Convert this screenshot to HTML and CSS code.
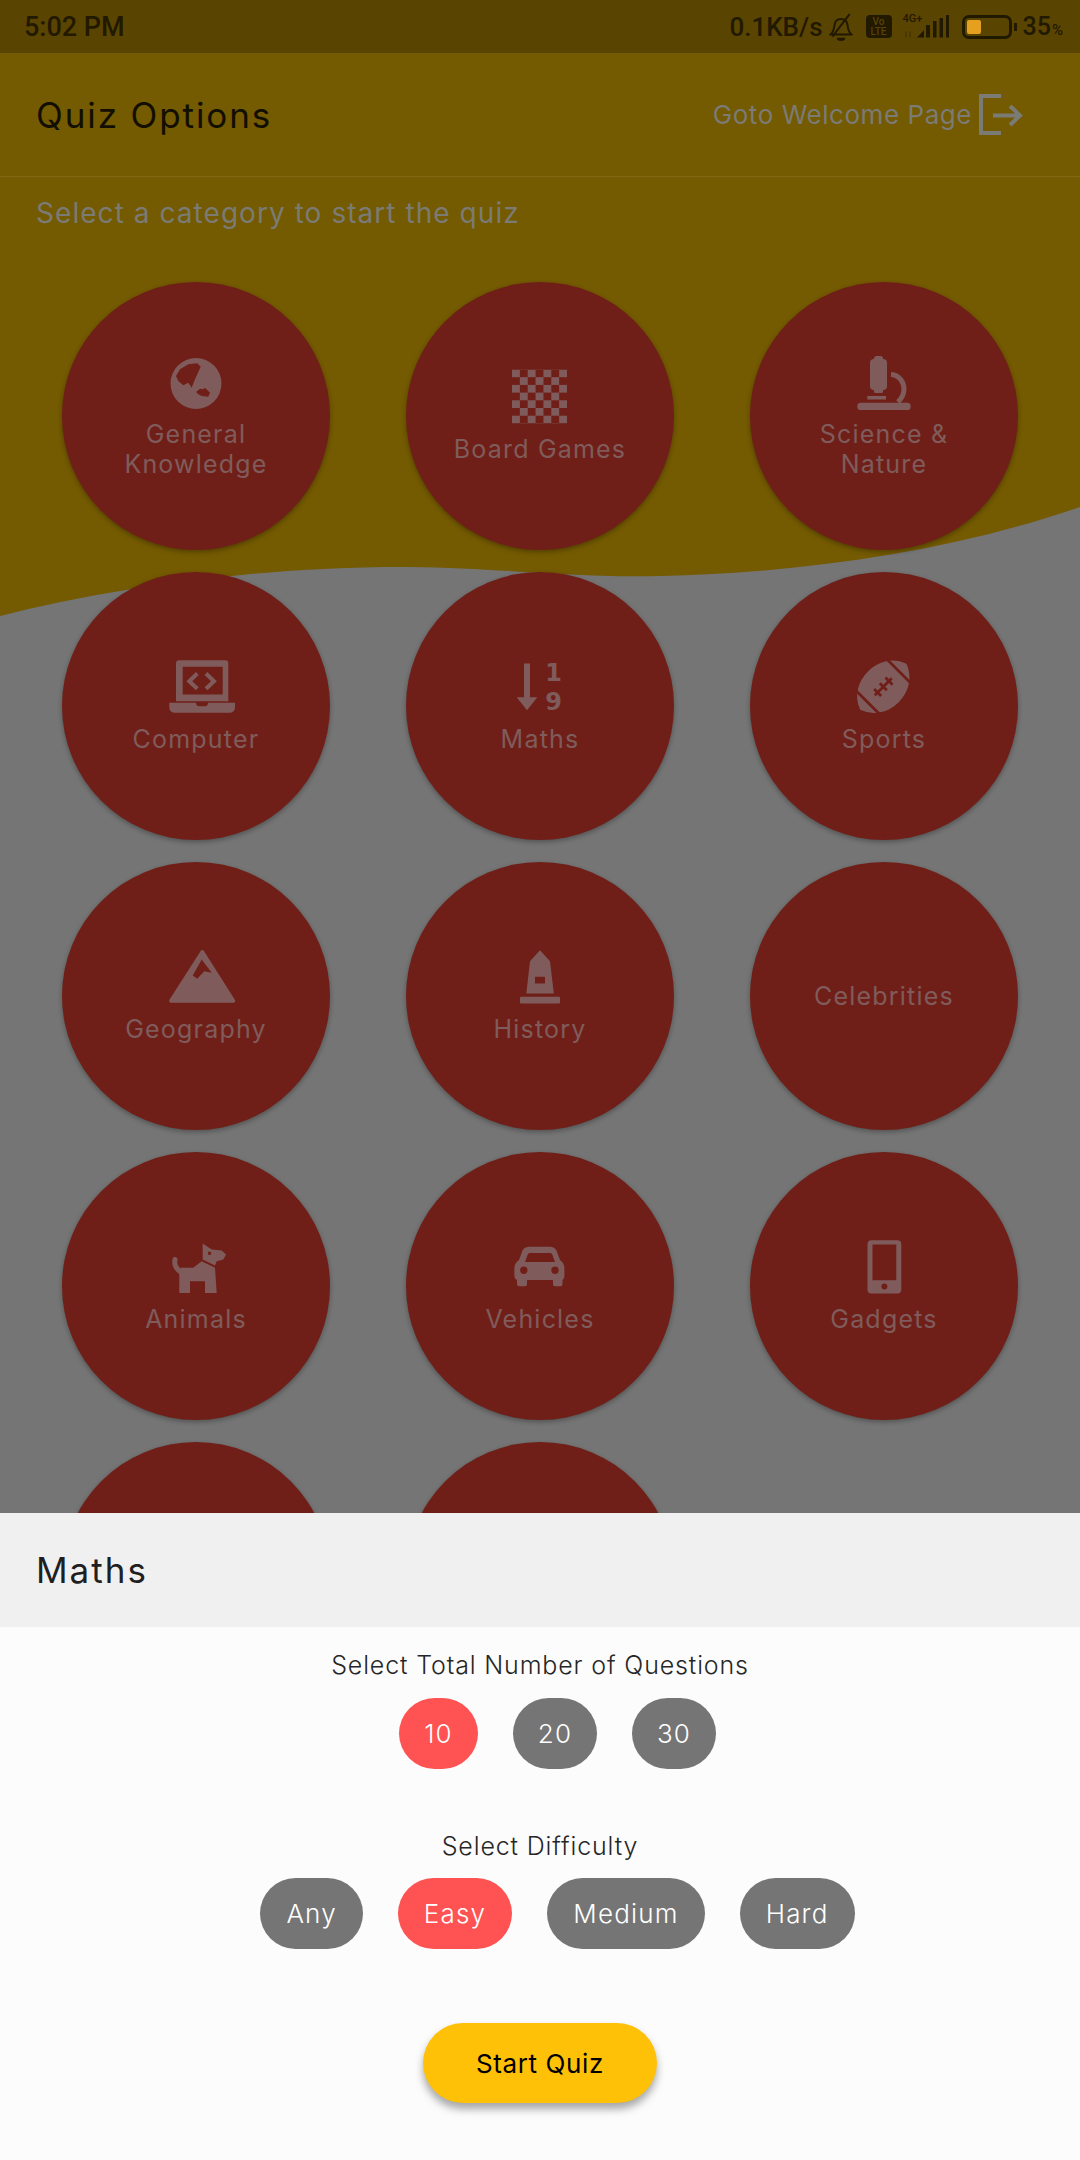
FILE: index.html
```html
<!DOCTYPE html>
<html lang="en">
<head>
  <meta charset="UTF-8">
  <meta name="viewport" content="width=device-width, initial-scale=1.0">
  <title>Quiz Options</title>
  <link rel="stylesheet" href="styles.css">
</head>
<body>
  <div class="screen">
    <div class="top">
      <svg class="wave" viewBox="0 0 1080 1513" width="1080" height="1513">
        <path d="M0 616C130 583 280 566 410 567C500 568 570 578 660 576C800 573 950 552 1080 507V0H0Z"/>
      </svg>

      <div class="statusbar">
        <span class="time">5:02 PM</span>
        <div class="status-right">
          <span class="speed">0.1KB/s</span>
          <svg class="st-bell" width="28" height="28" viewBox="0 0 26 26">
            <path d="M3 20c3-2 3.500-5 4-9 .5-3.500 3-5.500 6-5.500s5.500 2 6 5.500c.5 4 1 7 4 9Z" fill="none" stroke="currentColor" stroke-width="1.800" stroke-linejoin="round"/>
            <path d="M21 1 5 22" stroke="currentColor" stroke-width="1.800"/>
            <path d="M9 23h8a4 3 0 0 1-8 0Z" fill="currentColor"/>
          </svg>
          <div class="volte"><span>Vo</span><span>LTE</span></div>
          <div class="signal">
            <span class="net">4G+</span>
            <svg width="46" height="24" viewBox="0 0 46 24">
              <path d="M3 22.500v-6M7 16.500v6" stroke="currentColor" stroke-width="1" opacity="0.500"/>
              <path d="M14 22.500 21 15v7.500ZM23 22.500V10h4v12.500ZM30 22.500V6h3.500v16.500ZM36.500 22.500V3h3.500v19.500ZM43 22.500V0h3v22.500Z" fill="currentColor"/>
            </svg>
          </div>
          <div class="battery"><i></i></div>
          <span class="percent">35<small>%</small></span>
        </div>
      </div>

      <header class="appbar">
        <h1>Quiz Options</h1>
        <a class="goto">
          Goto Welcome Page
          <svg class="exit" width="46" height="42" viewBox="0 0 46 42">
            <path d="M23 2H3v37h20" fill="none" stroke="currentColor" stroke-width="4"/>
            <path d="M15 21.500h26M32 12l10 9.500L32 31" fill="none" stroke="currentColor" stroke-width="4"/>
          </svg>
        </a>
      </header>

      <p class="hint">Select a category to start the quiz</p>

      <div class="categories">
        <div class="category">
          <svg class="cat-icon" viewBox="0 0 60 60">
            <path fill-rule="evenodd" d="M30 5a25.500 25.500 0 1 0 0 51 25.500 25.500 0 0 0 0-51ZM10 23l4-6.700 8.300-5 9-1 3.400 3.400-3.400 7.600-2.300 5-3.300 8.400-3.400-5-5 2.600-5-4.300ZM30 39l4-3.300 3.300.6 1.700-1.600 5 5-1.700 4-6.600-.7-3.400-1.700Z"/>
          </svg>
          <span>General Knowledge</span>
        </div>
        <div class="category">
          <svg class="cat-icon" viewBox="0 0 60 60">
            <defs>
              <pattern id="checks" width="15.720" height="15.400" patternUnits="userSpaceOnUse" x="2" y="1.500">
                <rect width="7.860" height="7.700"/>
                <rect x="7.860" y="7.700" width="7.860" height="7.700"/>
              </pattern>
            </defs>
            <rect class="checks" x="2" y="1.500" width="55" height="54"/>
          </svg>
          <span>Board Games</span>
        </div>
        <div class="category">
          <svg class="cat-icon" viewBox="0 0 60 60">
            <rect x="20" y="3" width="9" height="6" rx="2.500"/>
            <rect x="16" y="6" width="17" height="31" rx="4"/>
            <rect x="20" y="35" width="9" height="5" rx="1.500"/>
            <rect x="13.300" y="43" width="18.700" height="3.500"/>
            <rect x="3.300" y="49.700" width="53.400" height="7.300" rx="3.600"/>
            <path d="M37 21.500C46 22 50 30 50 36c0 6-3 10-6 13" fill="none" stroke="currentColor" stroke-width="5"/>
          </svg>
          <span>Science &amp; Nature</span>
        </div>

        <div class="category">
          <svg class="cat-icon" viewBox="0 0 60 60">
            <path fill-rule="evenodd" d="M13 2.200h46.300a3 3 0 0 1 3 3v38H10v-38a3 3 0 0 1 3-3ZM16.700 8.800v27.700h40V8.800Z"/>
            <path d="M31.300 15.500l-8 7.700 8 7.600M40 15.500l8 7.700-8 7.600" fill="none" stroke="currentColor" stroke-width="4"/>
            <path d="M3.300 44.800H30q0 3.500 3.500 3.500h5q3.500 0 3.500-3.500h27V49q0 5.800-6 5.800H9.300q-6 0-6-5.800Z"/>
          </svg>
          <span>Computer</span>
        </div>
        <div class="category">
          <svg class="cat-icon" viewBox="0 0 60 60">
            <path d="M14 5.500h6v33.700h7.300L17 52.200 6.700 39.200H14Z"/>
            <text class="digit" x="43.500" y="23">1</text>
            <text class="digit" x="43.500" y="51.500">9</text>
          </svg>
          <span>Maths</span>
        </div>
        <div class="category">
          <svg class="cat-icon" viewBox="0 0 60 60">
            <g transform="translate(29.300 28.800) rotate(-45)">
              <path class="ball" d="M-31 0C-21-27 21-27 31 0C21 27-21 27-31 0Z"/>
              <path class="cut" d="M-22-26V26M22-26V26M-12 0H12M-8-5V5M0-5V5M8-5V5"/>
            </g>
          </svg>
          <span>Sports</span>
        </div>

        <div class="category">
          <svg class="cat-icon" viewBox="0 0 60 60">
            <path fill-rule="evenodd" d="M34.500 3.200a2 2 0 0 1 3.600 0L69 52a2 2 0 0 1-2 2.800H5.300A2 2 0 0 1 3.300 52ZM35.700 11.500l-9 16 4.600 3.300 7-7.600 7.400 1.600Z"/>
          </svg>
          <span>Geography</span>
        </div>
        <div class="category">
          <svg class="cat-icon" viewBox="0 0 60 60">
            <path fill-rule="evenodd" d="M30 2.200 40 13.200l3.800 32.300H16.300L20 13.200ZM25 28.800v6.700h10v-6.700Z"/>
            <rect x="10" y="48.800" width="40" height="6.700" rx="1"/>
          </svg>
          <span>History</span>
        </div>
        <div class="category"><span>Celebrities</span></div>

        <div class="category">
          <svg class="cat-icon" viewBox="0 0 60 60">
            <path fill-rule="evenodd" d="M36.700 5.500 45.700 11.500l10 1 4.300 4-2.700 5-6.600 1.700-1.700 4.300-12.300-6ZM43.500 13.500a1.800 1.800 0 1 0 0 3.600 1.800 1.800 0 0 0 0-3.600Z"/>
            <path d="M14.700 29.800H27.300l8.400-6.600L49 29.800 50.700 55H39V43.200H24V55H13.300V36Z"/>
            <path d="M14.500 34C10 30 8 27 9 21.500" fill="none" stroke="currentColor" stroke-width="5" stroke-linecap="round"/>
          </svg>
          <span>Animals</span>
        </div>
        <div class="category">
          <svg class="cat-icon" viewBox="0 0 60 60">
            <path fill-rule="evenodd" d="M20 8.800H39C44 8.800 46 11 47 14L50 22C53 24 54.400 27 54.400 30V38C54.400 40 53.500 41 52.500 42V46Q52.500 48.200 50.500 48.200H45Q43 48.200 43 46V42H17V46Q17 48.200 15 48.200H9Q7 48.200 7 46V42C5.500 41 4.400 40 4.400 38V30C4.400 27 6 24 9 22L12 14C13 11 15 8.800 20 8.800ZM20 15Q18 15 17.500 17L15 24H45L42.500 17Q42 15 40 15ZM13.800 28.500a3.700 3.700 0 1 0 0 7.400 3.700 3.700 0 0 0 0-7.400ZM45 28.500a3.700 3.700 0 1 0 0 7.400 3.700 3.700 0 0 0 0-7.400Z"/>
          </svg>
          <span>Vehicles</span>
        </div>
        <div class="category">
          <svg class="cat-icon" viewBox="0 0 60 60">
            <path fill-rule="evenodd" d="M17.500 2.200h25.800a4 4 0 0 1 4 4v45.300a4 4 0 0 1-4 4H17.500a4 4 0 0 1-4-4V6.200a4 4 0 0 1 4-4ZM18.500 6.500v35.700h23.800V6.500ZM30.400 45.500a3 3 0 1 0 0 6 3 3 0 0 0 0-6Z"/>
          </svg>
          <span>Gadgets</span>
        </div>

        <div class="category"></div>
        <div class="category"></div>
      </div>
    </div>

    <div class="sheet">
      <div class="sheet-title">Maths</div>
      <div class="sheet-body">
        <p class="field-label">Select Total Number of Questions</p>
        <div class="chips">
          <button class="chip num active">10</button>
          <button class="chip num">20</button>
          <button class="chip num">30</button>
        </div>

        <p class="field-label second">Select Difficulty</p>
        <div class="chips">
          <button class="chip">Any</button>
          <button class="chip active">Easy</button>
          <button class="chip">Medium</button>
          <button class="chip">Hard</button>
        </div>

        <button class="start">Start Quiz</button>
      </div>
    </div>
  </div>
</body>
</html>
```

FILE: styles.css
```css
body {
  margin: 0;
  background: #fcfcfc;
  font-family: Inter, "Liberation Sans", sans-serif;
}
.screen {
  width: 1080px;
  height: 2160px;
  display: flex;
  flex-direction: column;
  overflow: hidden;
}
.top {
  position: relative;
  height: 1513px;
  background: #757575;
  overflow: hidden;
}
.wave {
  position: absolute;
  top: 0;
  left: 0;
  fill: #745a00;
}

/* status bar */
.statusbar {
  position: relative;
  height: 53px;
  display: flex;
  align-items: center;
  justify-content: space-between;
  padding: 0 17px 0 24px;
  background: #5a4401;
  color: #211900;
  font-family: Roboto, sans-serif;
  font-weight: 500;
  font-size: 26px;
}
.time {
  font-size: 27px;
}
.status-right {
  display: flex;
  align-items: center;
}
.speed {
  margin-right: 4px;
}
.st-bell {
  margin-right: 11px;
}
.volte {
  width: 26px;
  height: 23px;
  background: currentColor;
  border-radius: 4px;
  display: flex;
  flex-direction: column;
  align-items: center;
  justify-content: center;
  font-size: 10px;
  line-height: 10px;
  margin-right: 11px;
}
.volte span {
  color: #5a4401;
}
.signal {
  position: relative;
  width: 46px;
  height: 24px;
  margin-right: 13px;
}
.signal svg {
  display: block;
}
.net {
  position: absolute;
  left: 0;
  top: -2px;
  font-size: 11px;
  line-height: 12px;
}
.battery {
  position: relative;
  width: 50px;
  height: 24px;
  box-sizing: border-box;
  border: 3px solid currentColor;
  border-radius: 7px;
  margin-right: 11px;
}
.battery i {
  position: absolute;
  left: 2px;
  top: 2px;
  width: 14px;
  height: 14px;
  border-radius: 2px;
  background: #e5a020;
}
.battery::after {
  content: "";
  position: absolute;
  right: -8px;
  top: 5px;
  width: 3px;
  height: 8px;
  background: currentColor;
}
.percent {
  font-size: 25px;
}
.percent small {
  font-size: 15px;
  margin-left: 1px;
}

/* app bar */
.appbar {
  position: relative;
  height: 123px;
  display: flex;
  align-items: center;
  justify-content: space-between;
  padding: 0 56px 0 36px;
  border-bottom: 1px solid #7f6915;
}
.appbar h1 {
  margin: 0;
  font-size: 35px;
  font-weight: 400;
  letter-spacing: 1.900px;
  color: #120e00;
}
.goto {
  display: flex;
  align-items: center;
  gap: 6px;
  font-size: 26px;
  letter-spacing: 0.550px;
  color: #7b7b76;
}
.hint {
  position: relative;
  margin: 21px 0 0 36px;
  font-size: 28px;
  letter-spacing: 1.050px;
  line-height: 30px;
  color: #7b7b76;
}

/* category circles */
.categories {
  position: relative;
  display: grid;
  grid-template-columns: repeat(3, 268px);
  column-gap: 76px;
  row-gap: 22px;
  margin-top: 54px;
  padding-left: 62px;
}
.category {
  width: 268px;
  height: 268px;
  border-radius: 50%;
  background: #701f18;
  box-shadow: 0 2px 5px rgba(0, 0, 0, 0.3);
  display: flex;
  flex-direction: column;
  align-items: center;
  justify-content: center;
  text-align: center;
  color: #7f5c5b;
  font-size: 25px;
  letter-spacing: 1.200px;
  line-height: 30px;
}
.category span {
  width: 200px;
}
.cat-icon {
  width: 60px;
  height: 60px;
  margin-bottom: 6px;
  fill: currentColor;
  overflow: visible;
}
.checks {
  fill: url(#checks);
}
#checks rect {
  fill: #7f5c5b;
}
.digit {
  font-family: "DejaVu Sans", sans-serif;
  font-weight: 700;
  font-size: 24px;
  letter-spacing: 0;
  text-anchor: middle;
}
.ball {
  stroke: currentColor;
  stroke-width: 3;
  stroke-linejoin: round;
}
.cut {
  fill: none;
  stroke: #701f18;
  stroke-width: 2.800;
}

/* bottom sheet */
.sheet {
  flex: 1;
  background: #fcfcfc;
}
.sheet-title {
  height: 114px;
  line-height: 114px;
  padding-left: 36px;
  background: #f0f0f0;
  font-size: 35px;
  letter-spacing: 2px;
  color: #1f1f1f;
}
.sheet-body {
  display: flex;
  flex-direction: column;
  align-items: center;
  padding-top: 23px;
}
.field-label {
  margin: 0 0 18px;
  font-size: 25px;
  font-weight: 300;
  letter-spacing: 0.850px;
  line-height: 30px;
  color: #262626;
}
.field-label.second {
  margin-top: 62px;
  margin-bottom: 17px;
}
.chips {
  display: flex;
  gap: 35px;
  padding-left: 35px;
}
.chip {
  height: 71px;
  padding: 0 26px;
  border: none;
  border-radius: 36px;
  background: #757575;
  color: #fff;
  font-family: inherit;
  font-size: 26px;
  font-weight: 300;
  letter-spacing: 1.200px;
}
.chip.active {
  background: #ff5252;
}
.chip.num {
  width: 84px;
  padding: 0;
}
.chip.num.active {
  width: 79px;
}
.start {
  width: 234px;
  height: 80px;
  margin-top: 74px;
  border: none;
  border-radius: 40px;
  background: #ffc107;
  box-shadow: 0 6px 8px rgba(0, 0, 0, 0.35);
  color: #000;
  font-family: inherit;
  font-size: 26px;
  letter-spacing: 0.600px;
}
```
